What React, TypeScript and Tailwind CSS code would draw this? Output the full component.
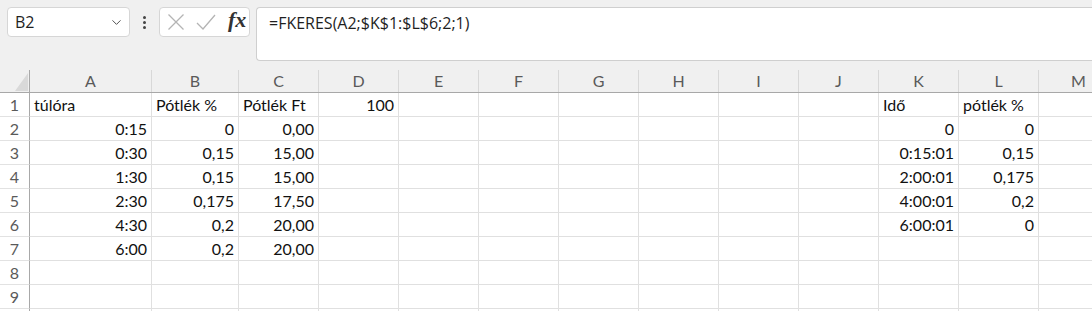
import { ChevronDown } from 'lucide-react';

const cols = [
  { id: 'A', w: 'w-[122px]' },
  { id: 'B', w: 'w-[87px]' },
  { id: 'C', w: 'w-[80px]' },
  { id: 'D', w: 'w-[80px]' },
  { id: 'E', w: 'w-[80px]' },
  { id: 'F', w: 'w-[80px]' },
  { id: 'G', w: 'w-[80px]' },
  { id: 'H', w: 'w-[80px]' },
  { id: 'I', w: 'w-[80px]' },
  { id: 'J', w: 'w-[80px]' },
  { id: 'K', w: 'w-[80px]' },
  { id: 'L', w: 'w-[80px]' },
  { id: 'M', w: 'w-[80px]' },
];

type Cell = { v: string; left?: boolean };

const rows: Record<string, Cell>[] = [
  {
    A: { v: 'túlóra', left: true },
    B: { v: 'Pótlék %', left: true },
    C: { v: 'Pótlék Ft', left: true },
    D: { v: '100' },
    K: { v: 'Idő', left: true },
    L: { v: 'pótlék %', left: true },
  },
  { A: { v: '0:15' }, B: { v: '0' }, C: { v: '0,00' }, K: { v: '0' }, L: { v: '0' } },
  { A: { v: '0:30' }, B: { v: '0,15' }, C: { v: '15,00' }, K: { v: '0:15:01' }, L: { v: '0,15' } },
  { A: { v: '1:30' }, B: { v: '0,15' }, C: { v: '15,00' }, K: { v: '2:00:01' }, L: { v: '0,175' } },
  { A: { v: '2:30' }, B: { v: '0,175' }, C: { v: '17,50' }, K: { v: '4:00:01' }, L: { v: '0,2' } },
  { A: { v: '4:30' }, B: { v: '0,2' }, C: { v: '20,00' }, K: { v: '6:00:01' }, L: { v: '0' } },
  { A: { v: '6:00' }, B: { v: '0,2' }, C: { v: '20,00' } },
  {},
  {},
];

function FormulaBar() {
  return (
    <div className="flex items-start h-[70px] bg-[#f0f0f0] pl-[7px] pt-[7px] font-['Open_Sans',sans-serif]">
      <div className="flex items-center justify-between w-[123px] h-[30px] shrink-0 bg-white border border-[#d6d6d6] rounded-[4px] pl-[7px] pr-[5px]">
        <span className="text-[16px] text-[#1f1f1f]">B2</span>
        <ChevronDown className="w-[15px] h-[15px] text-[#444]" strokeWidth={1.5} />
      </div>
      <div className="flex flex-col items-center justify-center gap-[2px] w-[29px] h-[30px] shrink-0">
        <span className="w-[3px] h-[3px] rounded-full bg-[#444]" />
        <span className="w-[3px] h-[3px] rounded-full bg-[#444]" />
        <span className="w-[3px] h-[3px] rounded-full bg-[#444]" />
      </div>
      <div className="flex items-center w-[91px] h-[30px] shrink-0 bg-white border border-[#d6d6d6] rounded-[4px] pl-[7px]">
        <svg width="18" height="18" viewBox="0 0 18 18" fill="none" stroke="#b4b4b4" strokeWidth="1.3">
          <path d="M1.5 1.5 L16.5 16.5 M16.5 1.5 L1.5 16.5" />
        </svg>
        <svg className="ml-[11px]" width="20" height="18" viewBox="0 0 20 18" fill="none" stroke="#b4b4b4" strokeWidth="1.3">
          <path d="M1 10 L7 16 L19 2" />
        </svg>
        <span className="ml-[12px] font-['Liberation_Serif',serif] italic font-bold text-[22px] text-[#333] leading-none -mt-[4px]">fx</span>
      </div>
      <div className="flex-1 h-[54px] ml-[6px] bg-white border border-r-0 border-[#cfcfcf] rounded-l-[4px] pl-[12px] pt-[2px]">
        <span className="text-[16px] leading-[26px] text-[#1f1f1f]">=FKERES(A2;$K$1:$L$6;2;1)</span>
      </div>
    </div>
  );
}

function Grid() {
  return (
    <div className="flex flex-col font-['Lato',sans-serif] text-[16px] text-[#111]">
      <div className="flex h-[23px] bg-[#f0f0f0] border-b border-[#a8a8a8]">
        <div className="relative w-[30px] shrink-0 border-r border-[#a8a8a8]">
          <svg className="absolute right-[1px] bottom-[1px]" width="13" height="18" viewBox="0 0 13 18">
            <polygon points="13,0 13,18 0,18" fill="#d9d9d9" />
          </svg>
        </div>
        {cols.map((c) => (
          <div
            key={c.id}
            className={`${c.w} shrink-0 flex items-center justify-center border-r border-[#d8d8d8] text-[#5a5a5a] text-[16px]`}
          >
            {c.id}
          </div>
        ))}
      </div>
      {rows.map((r, i) => (
        <div key={i} className="flex h-[24px] bg-white">
          <div className="w-[30px] shrink-0 flex items-center justify-center border-r border-[#a8a8a8] border-b border-b-[#e2e2e2] text-[#5a5a5a] text-[16px]">
            {i + 1}
          </div>
          {cols.map((c) => {
            const cell = r[c.id];
            return (
              <div
                key={c.id}
                className={`${c.w} shrink-0 flex items-center px-[4px] border-r border-b border-[#e0e0e0] ${
                  cell && cell.left ? 'justify-start' : 'justify-end'
                }`}
              >
                {cell ? cell.v : ''}
              </div>
            );
          })}
        </div>
      ))}
      <div className="flex h-[24px] bg-white">
        <div className="w-[30px] shrink-0 border-r border-[#a8a8a8]" />
        {cols.map((c) => (
          <div key={c.id} className={`${c.w} shrink-0 border-r border-[#e0e0e0]`} />
        ))}
      </div>
    </div>
  );
}

export default function App() {
  return (
    <div className="w-[1092px] h-[311px] overflow-hidden bg-white">
      <FormulaBar />
      <Grid />
    </div>
  );
}
